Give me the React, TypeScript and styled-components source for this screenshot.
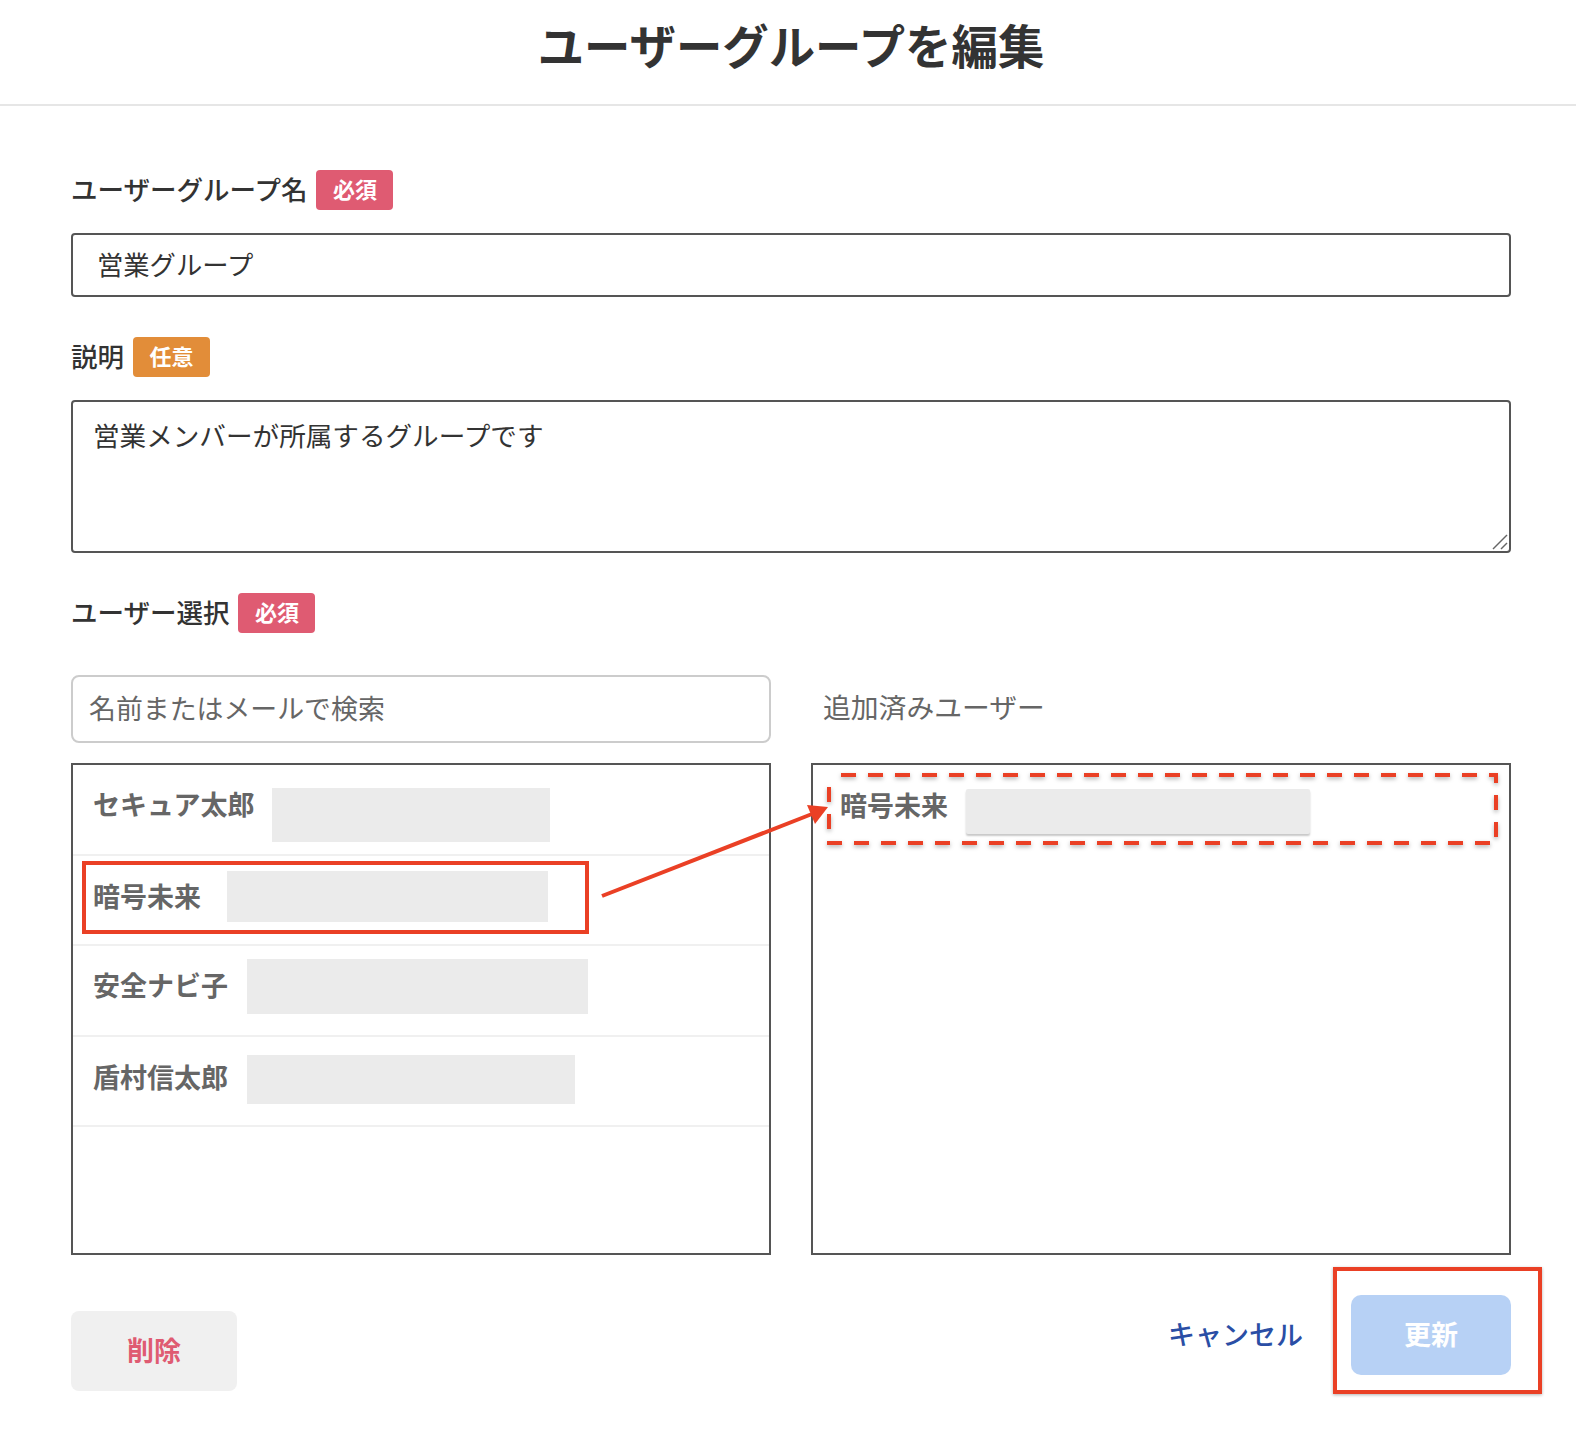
import React from "react";
import styled, { createGlobalStyle } from "styled-components";

const FONT = `"Noto Sans CJK JP", "Noto Sans", sans-serif`;
const RED = "#ea4025";

const Global = createGlobalStyle`
  html, body { margin: 0; padding: 0; background: #fff; }
  body { font-family: ${FONT}; color: #333; }
  * { box-sizing: border-box; }
`;

const Page = styled.div`
  position: relative;
  width: 1576px;
  min-height: 1450px;
  background: #fff;
  overflow: hidden;
`;

const Header = styled.header`
  height: 106px;
  border-bottom: 2px solid #e6e6e6;
  padding-left: 6px;
  display: flex;
  align-items: center;
  justify-content: center;
`;

const Title = styled.h1`
  margin: 0 0 17px;
  font-size: 46.4px;
  line-height: 60px;
  font-weight: 700;
  color: #333;
`;

const Form = styled.form`
  padding: 64px 65px 0 71px;
  display: flex;
  flex-direction: column;
`;

const LabelRow = styled.div`
  display: flex;
  align-items: center;
  gap: 9px;
  height: 40px;
  margin-bottom: 23px;
`;

const LabelText = styled.label`
  font-size: 26.5px;
  line-height: 36px;
  margin-bottom: 3px;
  font-weight: 500;
  color: #333;
`;

const Badge = styled.span<{ $tone: "required" | "optional" }>`
  width: 77px;
  height: 40px;
  border-radius: 4px;
  background: ${(p) => (p.$tone === "required" ? "#df5b72" : "#e28d39")};
  color: #fff;
  font-size: 22px;
  font-weight: 700;
  line-height: 36px;
  text-align: center;
`;

const TextInput = styled.input`
  display: block;
  width: 100%;
  height: 64px;
  margin-bottom: 40px;
  padding: 0 24px 4px;
  border: 2px solid #555;
  border-radius: 4px;
  background: #fff;
  color: #333;
  font-family: ${FONT};
  font-size: 26.3px;
  outline: none;
`;

const TextAreaWrap = styled.div`
  position: relative;
  height: 153px;
  margin-bottom: 40px;
`;

const TextArea = styled.textarea`
  display: block;
  width: 100%;
  height: 100%;
  padding: 15px 20px;
  border: 2px solid #555;
  border-radius: 4px;
  background: #fff;
  color: #333;
  font-family: ${FONT};
  font-size: 26.6px;
  line-height: 36px;
  outline: none;
  resize: none;
`;

const ResizeGrip = styled.svg`
  position: absolute;
  right: 3px;
  bottom: 3px;
  width: 16px;
  height: 16px;
  pointer-events: none;
`;

const Columns = styled.div`
  display: grid;
  grid-template-columns: 700px 700px;
  column-gap: 40px;
  row-gap: 20px;
  margin-top: 19px;
`;

const SearchInput = styled.input`
  display: block;
  width: 100%;
  height: 68px;
  padding: 0 16px 4px;
  border: 2px solid #ccc;
  border-radius: 8px;
  background: #fff;
  font-family: ${FONT};
  font-size: 26.9px;
  outline: none;
  color: #666;
  &::placeholder { color: #666; opacity: 1; }
`;

const AddedTitle = styled.div`
  padding-left: 12px;
  font-size: 27.8px;
  line-height: 62px;
  color: #666;
`;

const ListBox = styled.div`
  height: 492px;
  border: 2px solid #555;
  background: #fff;
`;

const UserRow = styled.div`
  display: flex;
  align-items: flex-start;
  height: 90.5px;
  padding-left: 20px;
  border-bottom: 2px solid #f0f0f0;
`;

const AddedRow = styled.div`
  display: flex;
  align-items: flex-start;
  padding-left: 27px;
`;

const UserName = styled.span<{ $top: number }>`
  margin-top: ${(p) => p.$top}px;
  font-size: 27px;
  line-height: 40px;
  font-weight: 700;
  color: #666;
  white-space: nowrap;
`;

const Redaction = styled.div<{ $gap: number; $top: number; $w: number; $h: number; $raised?: boolean }>`
  flex: none;
  margin-left: ${(p) => p.$gap}px;
  margin-top: ${(p) => p.$top}px;
  width: ${(p) => p.$w}px;
  height: ${(p) => p.$h}px;
  background: #ebebeb;
  border-radius: ${(p) => (p.$raised ? "2px" : "0")};
  box-shadow: ${(p) => (p.$raised ? "0 2px 2px rgba(0,0,0,0.22)" : "none")};
`;

const Footer = styled.div`
  display: flex;
  align-items: flex-start;
  margin-top: 40px;
`;

const DeleteButton = styled.button`
  width: 166px;
  height: 80px;
  margin-top: 16px;
  padding: 0 0 4px;
  border: 0;
  border-radius: 8px;
  background: #f0f0f0;
  color: #df5b72;
  font-family: ${FONT};
  font-size: 27px;
  font-weight: 700;
`;

const FooterRight = styled.div`
  margin-left: auto;
  display: flex;
  align-items: center;
  gap: 48px;
`;

const CancelLink = styled.a`
  color: #2a4ea5;
  font-size: 27px;
  line-height: 40px;
  margin-bottom: 3px;
  font-weight: 500;
  white-space: nowrap;
`;

const UpdateButton = styled.button`
  width: 160px;
  height: 80px;
  padding: 0 0 4px;
  border: 0;
  border-radius: 10px;
  background: #b7d1f5;
  color: #fff;
  font-family: ${FONT};
  font-size: 27px;
  font-weight: 700;
`;

const Callout = styled.div<{ $l: number; $t: number; $w: number; $h: number; $shadow?: boolean }>`
  position: absolute;
  left: ${(p) => p.$l}px;
  top: ${(p) => p.$t}px;
  width: ${(p) => p.$w}px;
  height: ${(p) => p.$h}px;
  border: 4px solid ${RED};
  box-shadow: ${(p) => (p.$shadow ? "0 1px 3px rgba(0,0,0,0.3)" : "none")};
  pointer-events: none;
`;

const DashedSvg = styled.svg`
  position: absolute;
  left: 824px;
  top: 770px;
  width: 680px;
  height: 80px;
  overflow: visible;
  pointer-events: none;
  filter: drop-shadow(0 2px 2px rgba(0, 0, 0, 0.3));
`;

const ArrowSvg = styled.svg`
  position: absolute;
  left: 590px;
  top: 795px;
  width: 250px;
  height: 110px;
  pointer-events: none;
`;

const users = [
  { name: "セキュア太郎", nameTop: 19, gap: 18, top: 23, w: 278, h: 54 },
  { name: "暗号未来", nameTop: 20, gap: 26, top: 15, w: 321, h: 51 },
  { name: "安全ナビ子", nameTop: 19, gap: 19, top: 13, w: 341, h: 55 },
  { name: "盾村信太郎", nameTop: 20, gap: 19, top: 18, w: 328, h: 49 },
];

export default function App() {
  return (
    <Page>
      <Global />
      <Header>
        <Title>ユーザーグループを編集</Title>
      </Header>
      <Form>
        <LabelRow>
          <LabelText>ユーザーグループ名</LabelText>
          <Badge $tone="required">必須</Badge>
        </LabelRow>
        <TextInput defaultValue="営業グループ" />
        <LabelRow>
          <LabelText>説明</LabelText>
          <Badge $tone="optional">任意</Badge>
        </LabelRow>
        <TextAreaWrap>
          <TextArea defaultValue="営業メンバーが所属するグループです" />
          <ResizeGrip viewBox="0 0 16 16">
            <line x1="1" y1="15" x2="15" y2="1" stroke="#666" strokeWidth="1.5" />
            <line x1="9" y1="15" x2="15" y2="9" stroke="#666" strokeWidth="1.5" />
          </ResizeGrip>
        </TextAreaWrap>
        <LabelRow>
          <LabelText>ユーザー選択</LabelText>
          <Badge $tone="required">必須</Badge>
        </LabelRow>
        <Columns>
          <SearchInput placeholder="名前またはメールで検索" />
          <AddedTitle>追加済みユーザー</AddedTitle>
          <ListBox>
            {users.map((u) => (
              <UserRow key={u.name}>
                <UserName $top={u.nameTop}>{u.name}</UserName>
                <Redaction $gap={u.gap} $top={u.top} $w={u.w} $h={u.h} />
              </UserRow>
            ))}
          </ListBox>
          <ListBox>
            <AddedRow>
              <UserName $top={20}>暗号未来</UserName>
              <Redaction $gap={18} $top={24} $w={344} $h={45} $raised />
            </AddedRow>
          </ListBox>
        </Columns>
        <Footer>
          <DeleteButton type="button">削除</DeleteButton>
          <FooterRight>
            <CancelLink>キャンセル</CancelLink>
            <UpdateButton type="button">更新</UpdateButton>
          </FooterRight>
        </Footer>
      </Form>

      <Callout $l={82} $t={861} $w={507} $h={73} />
      <DashedSvg viewBox="0 0 680 80">
        <rect x="5" y="5" width="667" height="68" fill="none" stroke={RED} strokeWidth="4" strokeDasharray="15 12" strokeDashoffset="15" />
      </DashedSvg>
      <Callout $l={1333} $t={1267} $w={209} $h={127} $shadow />
      <ArrowSvg viewBox="0 0 250 110">
        <line x1="12" y1="101" x2="222" y2="19" stroke={RED} strokeWidth="4" />
        <polygon points="238,12 217,10 225,29" fill={RED} />
      </ArrowSvg>
    </Page>
  );
}
